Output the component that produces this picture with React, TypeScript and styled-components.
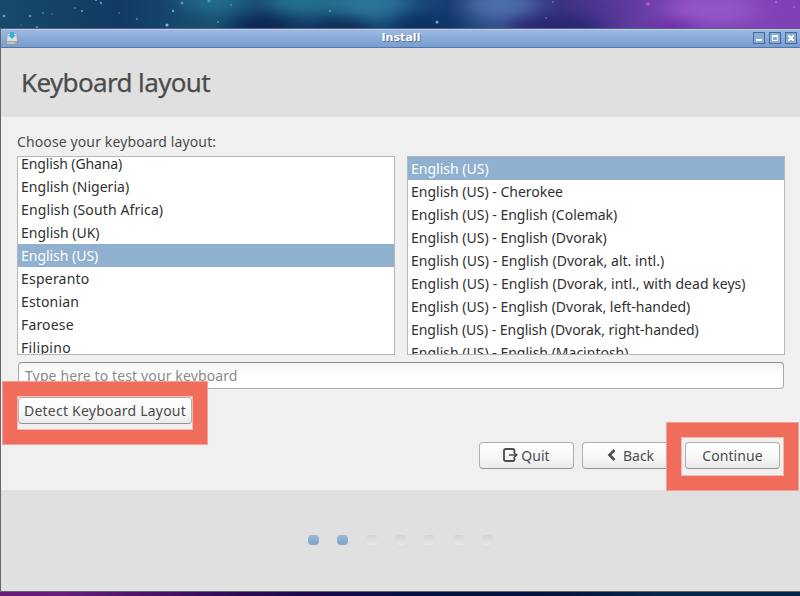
import React from "react";
import styled, { createGlobalStyle, css } from "styled-components";

const GlobalStyle = createGlobalStyle`
  * { box-sizing: border-box; }
  html, body { margin: 0; padding: 0; overflow: hidden; }
  body { font-family: "Noto Sans", "Open Sans", sans-serif; font-size: 14px; color: #4c4c4c; }
`;

const Desktop = styled.div`
  width: 800px;
  height: 596px;
  display: flex;
  flex-direction: column;
  position: relative;
  overflow: hidden;
`;

const Sky = styled.svg`
  display: block;
  width: 800px;
  height: 28px;
  flex: none;
`;

const LowerSky = styled.div`
  height: 4px;
  flex: none;
  background: linear-gradient(90deg, #681a7c 0, #6a1a80 60px, #4c126c 150px, #2d0a57 240px, #16094f 330px, #041044 430px, #02143f 560px, #06264c 660px, #032349 800px);
`;

const Window = styled.main`
  height: 564px;
  flex: none;
  display: flex;
  flex-direction: column;
  border: 1px solid #66666a;
  border-right: 0;
  border-top-color: #5d606e;
  background: #f0f0f0;
`;

const TitleBar = styled.header`
  height: 19px;
  flex: none;
  display: grid;
  grid-template-columns: 60px 1fr 60px;
  align-items: start;
  border-top: 1px solid #b4ccef;
  border-bottom: 1px solid #5176ac;
  background: linear-gradient(#9db9e5, #89aad8 50%, #789ecf);
`;

const DriveIcon = styled.svg`
  width: 14px;
  height: 15px;
  margin: 1px 0 0 4px;
`;

const WindowTitle = styled.div`
  text-align: center;
  font: bold 11px/15px "DejaVu Sans", sans-serif;
  letter-spacing: 0.05px;
  color: #fff;
  text-shadow: 1px 1px 0 #5e7196;
  padding-left: 1px;
`;

const WindowControls = styled.div`
  display: flex;
  justify-content: flex-end;
  gap: 4px;
  padding: 2px 3px 0 0;
`;

const ControlIcon = styled.svg`
  width: 12px;
  height: 12px;
  display: block;
`;

const PageHeader = styled.section`
  height: 69px;
  flex: none;
  padding: 14px 20px;
  background: #e0e0e0;
`;

const Heading = styled.h1`
  margin: 0;
  font-size: 26px;
  line-height: 40px;
  font-weight: 400;
  letter-spacing: -0.63px;
  color: #4c4c4c;
  -webkit-text-stroke: 0.25px #4c4c4c;
`;

const Content = styled.section`
  height: 373px;
  flex: none;
  display: flex;
  flex-direction: column;
  padding: 15px 15px 0 16px;
  background: #f0f0f0;
`;

const Label = styled.div`
  height: 24px;
  line-height: 20px;
  letter-spacing: 0.12px;
  white-space: nowrap;
`;

const Lists = styled.div`
  display: grid;
  grid-template-columns: 378px 378px;
  column-gap: 12px;
`;

const ListBox = styled.div<{ $scrolled?: boolean }>`
  height: 199px;
  border: 1px solid #b6b6b6;
  background: #fff;
  overflow: hidden;
  & > :first-child { margin-top: ${(p) => (p.$scrolled ? "-5px" : "0")}; }
`;

const Item = styled.div<{ $selected?: boolean; $tracking?: number }>`
  height: 23px;
  line-height: 24px;
  padding-left: 3px;
  white-space: nowrap;
  color: #303030;
  letter-spacing: ${(p) => p.$tracking ?? 0}px;
  ${(p) => p.$selected && css`
    color: #fff;
    background: #8fb1cf;
  `}
`;

const TestField = styled.input`
  width: 766px;
  height: 27px;
  flex: none;
  margin: 7px 0 0 1px;
  padding: 0 6px;
  border: 1px solid #a9a9a9;
  border-top-color: #8d8d8d;
  border-radius: 4px;
  background: linear-gradient(#f3f3f3, #fff 50%);
  box-shadow: 0 1px 0 #fafafa;
  font: inherit;
  letter-spacing: 0.12px;
  outline: none;
  &::placeholder { color: #8b8b8b; opacity: 1; }
`;

const Button = styled.button<{ $width: number; $tracking?: number }>`
  width: ${(p) => p.$width}px;
  height: 27px;
  flex: none;
  display: flex;
  align-items: center;
  justify-content: center;
  gap: 3px;
  padding: 0;
  border: 1px solid #b0b0b0;
  border-bottom-color: #969696;
  border-radius: 4px;
  background: linear-gradient(#fff, #f9f9f9 50%, #eaeaea);
  color: #4c4c4c;
  font: inherit;
  line-height: 25px;
  letter-spacing: ${(p) => p.$tracking ?? 0}px;
  white-space: nowrap;
`;

const DetectRow = styled.div`
  display: flex;
  padding: 8px 0 0 1px;
`;

const Navigation = styled.div`
  display: flex;
  justify-content: flex-end;
  gap: 8px;
  padding: 18px 5px 0 0;
`;

const ButtonIcon = styled.svg`
  width: 15px;
  height: 15px;
  display: block;
`;

const Footer = styled.footer`
  flex: 1;
  display: flex;
  justify-content: center;
  gap: 18px;
  padding: 45px 1px 0 0;
  background: #e0e0e0;
`;

const StepDot = styled.span<{ $done: boolean }>`
  width: 11px;
  height: 10px;
  border-radius: 4px;
  background: ${(p) => (p.$done ? "linear-gradient(#99bad7, #7fa4c6)" : "linear-gradient(#d3d3d3, #e8e8e8)")};
`;

const Highlight = styled.div<{ $x: number; $y: number; $w: number; $h: number }>`
  position: absolute;
  left: ${(p) => p.$x}px;
  top: ${(p) => p.$y}px;
  width: ${(p) => p.$w}px;
  height: ${(p) => p.$h}px;
  border: 15px solid #f06c5b;
  outline: 1px solid #f2a095;
  outline-offset: -1px;
  box-shadow: inset 0 0 0 1px #f5b9b0;
  pointer-events: none;
`;

const layouts: [string, number][] = [
  ["English (Ghana)", -0.12],
  ["English (Nigeria)", 0.03],
  ["English (South Africa)", 0.12],
  ["English (UK)", 0],
  ["English (US)", -0.03],
  ["Esperanto", 0.22],
  ["Estonian", 0.15],
  ["Faroese", 0.16],
  ["Filipino", 0.32],
];

const variants: [string, number][] = [
  ["English (US)", 0],
  ["English (US) - Cherokee", 0],
  ["English (US) - English (Colemak)", 0],
  ["English (US) - English (Dvorak)", 0],
  ["English (US) - English (Dvorak, alt. intl.)", 0.035],
  ["English (US) - English (Dvorak, intl., with dead keys)", 0.035],
  ["English (US) - English (Dvorak, left-handed)", 0],
  ["English (US) - English (Dvorak, right-handed)", -0.04],
  ["English (US) - English (Macintosh)", 0],
];

const stars: [number, number, number, string][] = [
  [4, 16, 1.3, "#6aa5d8"], [30, 16, 1.2, "#5c9bc9"], [21, 25, 0.8, "#3d80a5"],
  [37, 27, 1.1, "#4d93b5"], [43, 13, 0.9, "#4b8dad"], [52, 14, 0.8, "#4386ad"],
  [75, 8, 0.9, "#5697b5"], [82, 11, 1.1, "#62a4c8"], [101, 3, 1.2, "#5a91d3"],
  [96, 0, 1, "#65a6cc"], [119, 13, 0.8, "#4a8caf"], [137, 19, 1, "#4589b0"],
  [167, 25, 1.6, "#80b7d7"], [173, 11, 1.2, "#5ba4c4"], [182, 3, 1.5, "#4b9eb8"],
  [218, 22, 1.1, "#3f91ad"], [231, 5, 0.9, "#4294b0"], [209, 1, 1.6, "#35a0bb"],
  [330, 11, 1.2, "#4b91b5"], [437, 22, 1.6, "#8295c9"], [648, 4, 2, "#ae4fd0"],
  [546, 18, 1, "#655cb0"], [553, 2, 1, "#726dbd"], [776, 2, 1.3, "#a263d0"],
  [794, 7, 1.3, "#ad55cc"],
];

function Wallpaper() {
  return (
    <Sky viewBox="0 0 800 28" aria-hidden="true">
      <defs>
        <linearGradient id="space">
          <stop offset="0" stopColor="#174a6b" />
          <stop offset=".15" stopColor="#113a62" />
          <stop offset=".27" stopColor="#1a5274" />
          <stop offset=".34" stopColor="#153f6b" />
          <stop offset=".46" stopColor="#24658c" />
          <stop offset=".56" stopColor="#153c70" />
          <stop offset=".63" stopColor="#3a5896" />
          <stop offset=".70" stopColor="#3b3285" />
          <stop offset=".78" stopColor="#5b399b" />
          <stop offset=".86" stopColor="#874abd" />
          <stop offset="1" stopColor="#803fb5" />
        </linearGradient>
        <filter id="cloud" filterUnits="userSpaceOnUse" x="-40" y="-60" width="880" height="150" colorInterpolationFilters="sRGB">
          <feGaussianBlur stdDeviation="13 6" />
        </filter>
      </defs>
      <rect width="800" height="28" fill="url(#space)" />
      <g filter="url(#cloud)">
        <ellipse cx="214" cy="0" rx="30" ry="14" fill="#236a87" />
        <ellipse cx="262" cy="30" rx="32" ry="16" fill="#0b2853" />
        <ellipse cx="300" cy="0" rx="36" ry="14" fill="#24708c" />
        <ellipse cx="340" cy="31" rx="38" ry="14" fill="#0c2e59" />
        <ellipse cx="370" cy="4" rx="34" ry="13" fill="#2b7599" />
        <ellipse cx="422" cy="28" rx="34" ry="16" fill="#0c3265" />
        <ellipse cx="500" cy="5" rx="32" ry="13" fill="#4d6eac" />
        <ellipse cx="555" cy="28" rx="48" ry="14" fill="#2b2874" />
        <ellipse cx="672" cy="31" rx="24" ry="11" fill="#6b2aa5" />
        <ellipse cx="715" cy="10" rx="42" ry="13" fill="#9256c8" />
      </g>
      {stars.map(([x, y, r, fill]) => (
        <circle key={`${x}-${y}`} cx={x} cy={y} r={r} fill={fill} />
      ))}
    </Sky>
  );
}

function InstallIcon() {
  return (
    <DriveIcon viewBox="0 0 14 15" aria-hidden="true">
      <path d="M2.3 2.5h9.4l.8 8v3h-11v-3z" fill="#dedfe0" stroke="#929aa5" strokeWidth=".8" />
      <path d="M1.5 10.5h11v3h-11z" fill="#c1c3c3" stroke="#858a8e" strokeWidth=".6" />
      <path d="M5 1h4v3h2L7 8 3 4h2z" fill="#38afd8" />
      <path d="M10 12h2" stroke="#75a96e" />
    </DriveIcon>
  );
}

function Control({ kind }: { kind: "minimize" | "maximize" | "close" }) {
  return (
    <ControlIcon viewBox="0 0 12 12" shapeRendering="crispEdges" aria-label={kind}>
      <rect x=".5" y=".5" width="11" height="11" fill="#88acd8" stroke="#466b9a" />
      {kind === "minimize" && <path d="M3 7h6v2H3z" fill="#fff" />}
      {kind === "maximize" && <path d="M3 3h6v6H3zM4 5v3h4V5z" fill="#fff" fillRule="evenodd" />}
      {kind === "close" && (
        <path d="M3 3h2v1h2V3h2v2H8v2h1v2H7V8H5v1H3V7h1V5H3z" fill="#fff" />
      )}
    </ControlIcon>
  );
}

export default function App() {
  return (
    <Desktop>
      <GlobalStyle />
      <Wallpaper />
      <Window>
        <TitleBar>
          <InstallIcon />
          <WindowTitle>Install</WindowTitle>
          <WindowControls>
            <Control kind="minimize" />
            <Control kind="maximize" />
            <Control kind="close" />
          </WindowControls>
        </TitleBar>
        <PageHeader>
          <Heading>Keyboard layout</Heading>
        </PageHeader>
        <Content>
          <Label>Choose your keyboard layout:</Label>
          <Lists>
            <ListBox $scrolled>
              {layouts.map(([name, tracking]) => (
                <Item key={name} $selected={name === "English (US)"} $tracking={tracking}>{name}</Item>
              ))}
            </ListBox>
            <ListBox>
              {variants.map(([name, tracking]) => (
                <Item key={name} $selected={name === "English (US)"} $tracking={tracking}>{name}</Item>
              ))}
            </ListBox>
          </Lists>
          <TestField placeholder="Type here to test your keyboard" />
          <DetectRow>
            <Button $width={174} $tracking={0.22}>Detect Keyboard Layout</Button>
          </DetectRow>
          <Navigation>
            <Button $width={95}>
              <ButtonIcon viewBox="0 0 15 15" aria-hidden="true">
                <path d="M11.5 4V2.8Q11.5 1 9.7 1H2.8Q1 1 1 2.8v8.4Q1 13 2.8 13h6.9q1.8 0 1.8-1.8V10" fill="none" stroke="#4c4c4c" strokeWidth="1.8" />
                <path d="M6 7h7M10.5 4l3.2 3-3.2 3" fill="none" stroke="#4c4c4c" strokeWidth="1.7" />
              </ButtonIcon>
              Quit
            </Button>
            <Button $width={95}>
              <ButtonIcon viewBox="0 0 15 15" aria-hidden="true">
                <path d="M9.5 2L4.5 7l5 5" fill="none" stroke="#4c4c4c" strokeWidth="2.6" />
              </ButtonIcon>
              Back
            </Button>
            <Button $width={95} $tracking={0.06}>Continue</Button>
          </Navigation>
        </Content>
        <Footer>
          {Array.from({ length: 7 }, (_, step) => (
            <StepDot key={step} $done={step < 2} />
          ))}
        </Footer>
      </Window>
      <LowerSky />
      <Highlight $x={2} $y={381} $w={206} $h={64} />
      <Highlight $x={666} $y={422} $w={133} $h={69} />
    </Desktop>
  );
}
